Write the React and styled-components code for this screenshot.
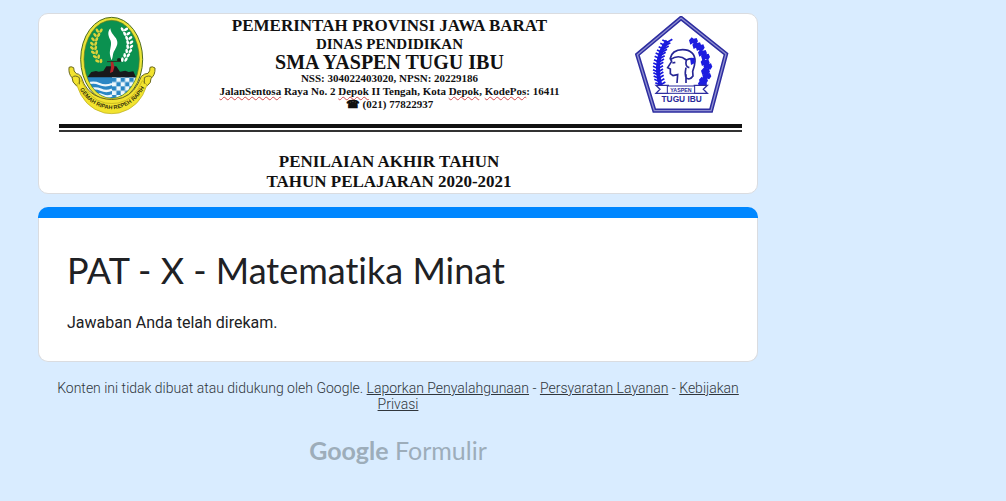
import React from "react";
import styled, { createGlobalStyle } from "styled-components";

const GlobalStyle = createGlobalStyle`
  *, *::before, *::after { box-sizing: border-box; }
  body {
    margin: 0;
    min-height: 100vh;
    background: #d9ecff;
    color: #202124;
    font-family: Roboto, "Liberation Sans", sans-serif;
  }
`;

const Page = styled.main`
  width: calc(100% - 76px);
  max-width: 720px;
  margin: 13px 0 0 38px;
`;

const Banner = styled.section`
  padding-bottom: 1px;
  background: #fff;
  border: 1px solid #dadce0;
  border-radius: 10px;
  overflow: hidden;
  color: #111;
  font-family: "Liberation Serif", "Times New Roman", serif;
  font-weight: 700;
  text-align: center;
`;

const Letterhead = styled.div`
  display: flex;
  justify-content: space-between;
  align-items: flex-start;
  padding: 2px 28px 0 29px;
`;

const School = styled.div`
  flex: 1;
  padding-right: 12px;
  white-space: nowrap;
`;

const Line = styled.p`
  margin: 0;
  font-size: ${(p) => p.$size}px;
  line-height: ${(p) => p.$height}px;
`;

const Misspelt = styled.span`
  text-decoration: underline wavy #d4474a 1px;
  text-decoration-skip-ink: none;
  text-underline-offset: 1px;
`;

const DoubleRule = styled.hr`
  height: 8px;
  margin: 9px 15px 0 20px;
  border: 0;
  border-top: 4px solid #111;
  border-bottom: 2px solid #333;
`;

const ExamTitle = styled.div`
  padding: 20px 18px 0 0;
`;

const FormCard = styled.section`
  margin-top: 13px;
`;

const ThemeBar = styled.div`
  height: 11px;
  background: #0087ff;
  border-radius: 10px 10px 0 0;
`;

const FormBody = styled.div`
  padding: 30px 28px 28px;
  background: #fff;
  border: 1px solid #dadce0;
  border-top: 0;
  border-radius: 0 0 10px 10px;
`;

const Title = styled.h1`
  margin: 0;
  font-family: Lato, "Open Sans", sans-serif;
  font-size: 36px;
  font-weight: 400;
  font-variant-ligatures: none;
  line-height: 44px;
`;

const Message = styled.p`
  margin: 21px 0 0;
  font-size: 16px;
  line-height: 20px;
`;

const Footer = styled.footer`
  color: #50575e;
  text-align: center;
`;

const Legal = styled.p`
  margin: 18px 16px 0;
  color: #30363c;
  font-size: 14px;
  font-weight: 300;
  line-height: 16px;
`;

const LegalLink = styled.a`
  color: inherit;
  text-decoration: underline;
`;

const Brand = styled.a`
  display: inline-block;
  margin-top: 22px;
  color: #9dadba;
  font-family: Lato, "Open Sans", sans-serif;
  font-size: 25px;
  line-height: 32px;
  text-decoration: none;
`;

const BrandName = styled.span`
  font-weight: 700;
`;

const Crest = styled.svg`
  flex: none;
  display: block;
`;

const leafAngles = [0, 1, 2, 3, 4, 5, 6, 7];

function ProvinceCrest() {
  return (
    <Crest width="88" height="99" viewBox="114 33 264 297" role="img" aria-label="Jawa Barat">
      <defs>
        <clipPath id="shield">
          <ellipse cx="245" cy="163" rx="82" ry="116" />
        </clipPath>
        <pattern id="checks" x="246" y="218" width="26" height="26" patternUnits="userSpaceOnUse">
          <rect width="26" height="26" fill="#eef7fb" />
          <rect width="13" height="13" fill="#2a86c4" />
          <rect x="13" y="13" width="13" height="13" fill="#2a86c4" />
        </pattern>
        <path id="motto" d="M145 244Q178 309 245 313Q312 309 348 240" />
      </defs>
      <ellipse cx="245" cy="163" rx="93" ry="126" fill="#e9e337" stroke="#4d6b20" strokeWidth="3" />
      <ellipse cx="245" cy="163" rx="83" ry="117" fill="#0b9150" stroke="#6b7a1c" strokeWidth="2" />
      <g clipPath="url(#shield)">
        <rect x="160" y="216" width="86" height="75" fill="#2a86c4" />
        <rect x="246" y="216" width="86" height="75" fill="url(#checks)" />
        <path d="M172 237q18-8 36 0t38 0M178 254q17-8 34 0t34 0M190 271q14-7 28 0t28 0" fill="none" stroke="#eef7fb" strokeWidth="7" />
        <path d="M172 217l12-16 14-3 8 2 14-2 9-14h30l11 16 16-3 10 4 14-2 8 18z" fill="#18191b" />
      </g>
      <path d="M242 168l7 1 4 17-4 14-9 4 3-17z" fill="#b3262b" />
      <path d="M241 70c-10 12-6 24 1 37 4 13-4 27-2 42 2 9 3 12 5 17 5-12 2-19 9-30 7-13 12-22 4-36-8-11-16-17-17-30z" fill="#fff" />
      <path d="M216 72c-32 24-32 68 0 99" fill="none" stroke="#64781c" strokeWidth="2" />
      <path d="M270 68c36 24 38 66 3 96" fill="none" stroke="#315d46" strokeWidth="2" />
      {leafAngles.map((n) => {
        const y = 77 + n * 13;
        const bend = Math.round(24 * Math.sin(((n + 1) / 9) * Math.PI));
        return (
          <g key={n}>
            <ellipse cx={210 - bend} cy={y} rx="7" ry="4" transform={`rotate(${55 - n * 4} ${210 - bend} ${y})`} fill="#d9d33b" />
            <ellipse cx={221 - bend} cy={y} rx="7" ry="4" transform={`rotate(${-55 - n * 4} ${221 - bend} ${y})`} fill="#d9d33b" />
            <ellipse cx={269 + bend} cy={y - 4} rx="7" ry="4" transform={`rotate(${60 + n * 5} ${269 + bend} ${y - 4})`} fill="#fff" />
            <ellipse cx={280 + bend} cy={y - 4} rx="7" ry="4" transform={`rotate(${-30 - n * 4} ${280 + bend} ${y - 4})`} fill="#fff" />
          </g>
        );
      })}
      <circle cx="267" cy="165" r="6" fill="#16251c" />
      <path d="M231 170l42-1" stroke="#2b3423" strokeWidth="3" />
      <path
        d="M117 187q-2 20 9 31 0 14 14 25 7-4 8-8 22 48 64 61 33 9 66 0 44-15 64-62l10 8q12-8 11-22 13-9 12-31-8-6-15-2 1 12-6 18-10 0-20 9-18 50-56 64-33 11-66 0-45-14-59-64-8-9-14-8-9-7-8-18-8-5-14-1z"
        fill="#f2e32f"
        stroke="#69671d"
        strokeWidth="3"
      />
      <path d="M140 239q21 69 83 85 22 4 44 0 63-16 84-84l-14-13q-23 57-73 67-19 3-38 0-49-10-72-68z" fill="#f2e32f" stroke="#b7a91e" strokeWidth="2" />
      <path d="M126 218q8-10 22 0v20M366 218q-8-10-23 0v18" fill="none" stroke="#69671d" strokeWidth="3" />
      <text fill="#35330c" fontFamily="Liberation Sans, sans-serif" fontWeight="700" fontSize="17">
        <textPath href="#motto" startOffset="50%" textAnchor="middle">GEMAH RIPAH REPEH RAPIH</textPath>
      </text>
    </Crest>
  );
}

function SchoolCrest() {
  const grains = [0, 1, 2, 3, 4, 5, 6, 7, 8, 9, 10, 11, 12, 13];
  const buds = [[220, 108], [230, 121], [240, 127], [247, 144], [256, 155], [255, 172], [263, 184], [256, 199], [260, 213], [250, 226], [247, 237]];
  return (
    <Crest width="94" height="97" viewBox="45 33 282 291" role="img" aria-label="Yaspen Tugu Ibu">
      <g fill="none" stroke="#2d2da0">
        <path d="M183 39L318 147 273 317H103L52 149z" fill="#fff" strokeWidth="13" />
        <path d="M183 39L318 147 273 317H103L52 149z" stroke="#8f8fd0" strokeWidth="4" />
        <path d="M142 108q-42 55-21 132" stroke="#1d1de0" strokeWidth="12" />
        <path d="M222 108q49 55 27 130" stroke="#1d1de0" strokeWidth="6" />
        {grains.map((n) => {
          const t = n / 13;
          const x = Math.round(142 - 84 * t + 63 * t * t);
          const y = Math.round(108 + 128 * t);
          return <path key={n} d={`M${x - 15} ${y - 3}l15 7 15-9`} stroke="#1717dc" strokeWidth="5" />;
        })}
      </g>
      {buds.map(([x, y], n) => (
        <path key={n} d={`M${x - 13} ${y - 2}l8-9 6 4 9-2 4 10-6 9-10-3-7 4z`} fill="#1d1de0" />
      ))}
      <path d="M150 162c4-20 19-28 38-28 24 0 38 14 37 35-1 14-4 22-7 30l1 14c-6 9-15 11-20 5-6-8-3-20-1-30M150 160l5 9-12 19 8 4v14l8 6 14-3-2 25M198 208v26M151 164q25-18 48 1 16-7 24-2M157 174l9-2M199 165q-5 20 9 23" fill="none" stroke="#262695" strokeWidth="5" />
      <path d="M210 160l13-2 2 16-12 6z" fill="#1d1de0" />
      <path d="M108 241h37v24h-37l12-12zM262 241h-39v24h39l-12-12z" fill="#fff" stroke="#2d2da0" strokeWidth="4" />
      <rect x="142" y="243" width="82" height="22" fill="#fff" stroke="#2d2da0" strokeWidth="3" />
      <g fill="#29299a" fontFamily="Liberation Sans, sans-serif" textAnchor="middle">
        <text x="183" y="260" fontSize="16">YASPEN</text>
        <text x="185" y="291" fontSize="25" fontWeight="700">TUGU IBU</text>
      </g>
    </Crest>
  );
}

export default function App() {
  return (
    <>
      <GlobalStyle />
      <Page>
        <Banner>
          <Letterhead>
            <ProvinceCrest />
            <School>
              <Line $size={17} $height={20}>PEMERINTAH PROVINSI JAWA BARAT</Line>
              <Line $size={15} $height={16}>DINAS PENDIDIKAN</Line>
              <Line $size={20} $height={20}>SMA YASPEN TUGU IBU</Line>
              <Line $size={11} $height={13}>NSS: 304022403020, NPSN: 20229186</Line>
              <Line $size={11} $height={13}>
                <Misspelt>JalanSentosa</Misspelt> Raya No. 2 <Misspelt>Depok</Misspelt> II Tengah, Kota{" "}
                <Misspelt>Depok</Misspelt>, <Misspelt>KodePos</Misspelt>: 16411
              </Line>
              <Line $size={11} $height={13}>☎ (021) 77822937</Line>
            </School>
            <SchoolCrest />
          </Letterhead>
          <DoubleRule />
          <ExamTitle>
            <Line $size={17} $height={20}>PENILAIAN AKHIR TAHUN</Line>
            <Line $size={17} $height={20}>TAHUN PELAJARAN 2020-2021</Line>
          </ExamTitle>
        </Banner>
        <FormCard>
          <ThemeBar />
          <FormBody>
            <Title>PAT - X - Matematika Minat</Title>
            <Message>Jawaban Anda telah direkam.</Message>
          </FormBody>
        </FormCard>
        <Footer>
          <Legal>
            Konten ini tidak dibuat atau didukung oleh Google. <LegalLink href="#report">Laporkan Penyalahgunaan</LegalLink> -{" "}
            <LegalLink href="#terms">Persyaratan Layanan</LegalLink> - <LegalLink href="#privacy">Kebijakan Privasi</LegalLink>
          </Legal>
          <Brand href="#forms">
            <BrandName>Google</BrandName> Formulir
          </Brand>
        </Footer>
      </Page>
    </>
  );
}
